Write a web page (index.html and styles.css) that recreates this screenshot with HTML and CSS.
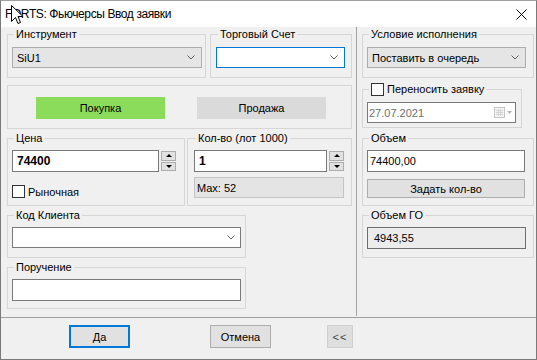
FILE: index.html
```html
<!DOCTYPE html>
<html lang="ru">
<head>
  <meta charset="UTF-8" />
  <title>FORTS: Фьючерсы Ввод заявки</title>
  <link rel="stylesheet" href="styles.css">
</head>
<body>
  <div class="window">
    <div class="titlebar">
      <span class="title">FORTS: Фьючерсы Ввод заявки</span>
      <svg class="close" width="11" height="11" viewBox="0 0 11 11">
        <path d="M0.5 0.5L10.5 10.5M10.5 0.5L0.5 10.5" stroke="#000" stroke-width="1"/>
      </svg>
    </div>

    <div class="main">
      <div class="col-left">
        <div class="row">
          <fieldset class="group g-instr">
            <legend>Инструмент</legend>
            <div class="combo gray">
              <span>SiU1</span>
              <svg class="chev" width="8" height="5" viewBox="0 0 8 5"><path d="M0.5 0.5L4 4L7.5 0.5" fill="none" stroke="#606060"/></svg>
            </div>
          </fieldset>
          <fieldset class="group g-acc">
            <legend>Торговый Счет</legend>
            <div class="combo focus">
              <span></span>
              <svg class="chev" width="8" height="5" viewBox="0 0 8 5"><path d="M0.5 0.5L4 4L7.5 0.5" fill="none" stroke="#606060"/></svg>
            </div>
          </fieldset>
        </div>

        <fieldset class="group g-side">
          <button class="side buy">Покупка</button>
          <button class="side sell">Продажа</button>
        </fieldset>

        <div class="row row-tight">
          <fieldset class="group g-price">
            <legend>Цена</legend>
            <div class="spin-row">
              <input class="field bold" type="text" value="74400">
              <div class="spin"><span class="up"></span><span class="down"></span></div>
            </div>
            <label class="check-row"><span class="check"></span>Рыночная</label>
          </fieldset>
          <fieldset class="group g-qty">
            <legend>Кол-во (лот 1000)</legend>
            <div class="spin-row">
              <input class="field bold" type="text" value="1">
              <div class="spin"><span class="up"></span><span class="down"></span></div>
            </div>
            <div class="readonly">Max: 52</div>
          </fieldset>
        </div>

        <fieldset class="group g-client">
          <legend>Код Клиента</legend>
          <div class="combo white">
            <span></span>
            <svg class="chev" width="8" height="5" viewBox="0 0 8 5"><path d="M0.5 0.5L4 4L7.5 0.5" fill="none" stroke="#606060"/></svg>
          </div>
        </fieldset>

        <fieldset class="group g-order">
          <legend>Поручение</legend>
          <input class="field" type="text" value="">
        </fieldset>
      </div>

      <div class="vsep"></div>

      <div class="col-right">
        <fieldset class="group g-cond">
          <legend>Условие исполнения</legend>
          <div class="combo gray">
            <span>Поставить в очередь</span>
            <svg class="chev" width="8" height="5" viewBox="0 0 8 5"><path d="M0.5 0.5L4 4L7.5 0.5" fill="none" stroke="#606060"/></svg>
          </div>
        </fieldset>

        <fieldset class="group g-move">
          <legend><span class="legend-check"><span class="check"></span>Переносить заявку</span></legend>
          <div class="date">
            <span>27.07.2021</span>
            <svg class="cal" width="18" height="11" viewBox="0 0 18 11">
              <rect x="0.5" y="0.5" width="10" height="10" fill="#f4f4f4" stroke="#c4c4c4"/>
              <path d="M2 3.5H9M2 5.5H9M2 7.5H9M4.5 2V9M6.5 2V9" stroke="#d4d4d4"/>
              <path d="M13 4H18L15.5 7Z" fill="#b4b4b4"/>
            </svg>
          </div>
        </fieldset>

        <fieldset class="group g-vol">
          <legend>Объем</legend>
          <input class="field vol" type="text" value="74400,00">
          <button class="btn wide">Задать кол-во</button>
        </fieldset>

        <fieldset class="group g-margin">
          <legend>Объем ГО</legend>
          <div class="readonly dark">4943,55</div>
        </fieldset>
      </div>
    </div>

    <div class="footer">
      <button class="btn default">Да</button>
      <button class="btn cancel">Отмена</button>
      <button class="btn collapse">&lt;&lt;</button>
    </div>

    <svg class="cursor" width="13" height="21" viewBox="0 0 13 21">
      <path d="M0.5 0.5V16.5L4.5 12.5L7 18.5L9.5 17.5L7 11.5H12Z" fill="#fff" stroke="#000" stroke-width="1" stroke-linejoin="miter"/>
    </svg>
  </div>
</body>
</html>
```

FILE: styles.css
```css
* {
  box-sizing: border-box;
}

body {
  margin: 0;
  background: #fff;
  font-family: "Liberation Sans", Arial, sans-serif;
  font-size: 11px;
  color: #000;
}

.window {
  position: relative;
  width: 537px;
  height: 360px;
  border: 1px solid #7a7a7a;
  border-top-color: #a0a0a0;
  background: #f0f0f0;
  display: flex;
  flex-direction: column;
}

.titlebar {
  height: 26px;
  background: #fff;
  display: flex;
  align-items: center;
  padding-left: 4px;
  font-size: 12px;
  letter-spacing: -0.4px;
}

.close {
  margin-left: auto;
  margin-right: 9px;
}

.cursor {
  position: absolute;
  left: 10px;
  top: 4px;
}

/* main area */

.main {
  height: 290px;
  display: flex;
  padding: 1px 2px 0 6px;
}

.col-left {
  width: 345px;
  display: flex;
  flex-direction: column;
  gap: 3px;
}

.col-right {
  width: 172px;
  display: flex;
  flex-direction: column;
  gap: 3px;
}

.vsep {
  width: 1px;
  background: #a0a0a0;
  margin: -1px 5px 1px 4px;
}

.row {
  display: flex;
  gap: 4px;
}

.row-tight {
  gap: 2px;
}

/* group boxes */

.group {
  margin: 0;
  min-width: 0;
  border: 1px solid #d6d6d6;
  padding: 6px 3px 9px 4px;
}

.group legend {
  padding: 0 2px;
  margin-left: 2px;
  line-height: 13px;
}

.g-instr {
  width: 199px;
}

.g-acc {
  flex: 1;
  padding-left: 5px;
  padding-right: 6px;
}

.g-side {
  margin-top: 4px;
  padding: 11px 0 9px 28px;
  display: flex;
  gap: 32px;
}

.g-price {
  width: 178px;
  padding: 5px 8px 7px 4px;
}

.g-qty {
  flex: 1;
  padding: 5px 7px 7px 6px;
}

.g-client,
.g-order {
  width: 239px;
  padding: 5px 4px 9px 4px;
}

.g-order {
  padding-bottom: 7px;
}

.g-cond {
  padding: 6px 7px 9px 4px;
}

.g-move {
  width: 160px;
  margin-top: 2px;
  padding: 6px 5px 4px 4px;
}

.g-vol {
  margin-top: 1px;
  padding: 5px 8px 7px 4px;
}

.g-margin {
  padding: 5px 7px 8px 4px;
}

/* controls */

.combo {
  height: 21px;
  display: flex;
  align-items: center;
  justify-content: space-between;
  padding: 0 6px 0 4px;
  border: 1px solid #adadad;
  background: #e5e5e5;
}

.combo.focus {
  background: #fff;
  border-color: #0078d7;
}

.combo.white {
  background: #fff;
  border-color: #7a7a7a;
  padding-right: 5px;
}

.field {
  display: block;
  width: 100%;
  height: 22px;
  margin: 0;
  padding: 0 4px;
  border: 1px solid #7a7a7a;
  background: #fff;
  font: inherit;
  color: #000;
  outline: none;
}

.field.bold {
  font-weight: bold;
  font-size: 12px;
}

.field.vol {
  padding-left: 2px;
}

.spin-row {
  display: flex;
  gap: 2px;
}

.spin-row .field {
  flex: 1;
  width: auto;
  min-width: 0;
}

.spin {
  width: 15px;
  display: flex;
  flex-direction: column;
  gap: 1px;
  padding: 1px 0;
}

.spin span {
  flex: 1;
  display: flex;
  align-items: center;
  justify-content: center;
  border: 1px solid #adadad;
  background: #e1e1e1;
}

.spin span::before {
  content: "";
  border-left: 3px solid transparent;
  border-right: 3px solid transparent;
}

.spin .up::before {
  border-bottom: 3px solid #000;
}

.spin .down::before {
  border-top: 3px solid #000;
}

.check-row {
  display: flex;
  align-items: center;
  gap: 3px;
  margin-top: 13px;
  height: 13px;
}

.check {
  width: 13px;
  height: 13px;
  border: 1px solid #333;
  background: #fff;
  flex-shrink: 0;
}

.legend-check {
  display: inline-flex;
  align-items: center;
  gap: 3px;
  height: 13px;
  vertical-align: top;
}

.readonly {
  height: 21px;
  margin-top: 5px;
  display: flex;
  align-items: center;
  padding-left: 2px;
  border: 1px solid #c4c4c4;
  background: #e4e4e4;
}

.readonly.dark {
  height: 22px;
  margin-top: 0;
  padding-left: 6px;
  border-color: #6e6e6e;
  background: #ececec;
}

.date {
  height: 21px;
  display: flex;
  align-items: center;
  justify-content: space-between;
  padding: 0 3px 0 1px;
  border: 1px solid #7a7a7a;
  background: #fff;
  color: #6d6d6d;
}

/* buttons */

.side {
  width: 129px;
  height: 22px;
  border: none;
  font: inherit;
  color: #000;
  padding: 0;
}

.side.buy {
  background: #8cdc5b;
}

.side.sell {
  background: #dadada;
}

.btn {
  height: 23px;
  width: 61px;
  padding: 0;
  border: 1px solid #adadad;
  background: #e1e1e1;
  font: inherit;
  color: #000;
}

.btn.wide {
  display: block;
  width: 100%;
  height: 19px;
  margin-top: 7px;
}

.footer {
  flex: 1;
  display: flex;
  align-items: flex-start;
  padding: 7px 0 0 68px;
  border-top: 1px solid #a0a0a0;
}

.btn.default {
  border: 2px solid #0078d7;
}

.btn.cancel {
  margin-left: 80px;
}

.btn.collapse {
  width: 26px;
  margin-left: 56px;
  border-color: #cfcfcf;
  background: #dedede;
  color: #444;
  letter-spacing: 1px;
}
```
